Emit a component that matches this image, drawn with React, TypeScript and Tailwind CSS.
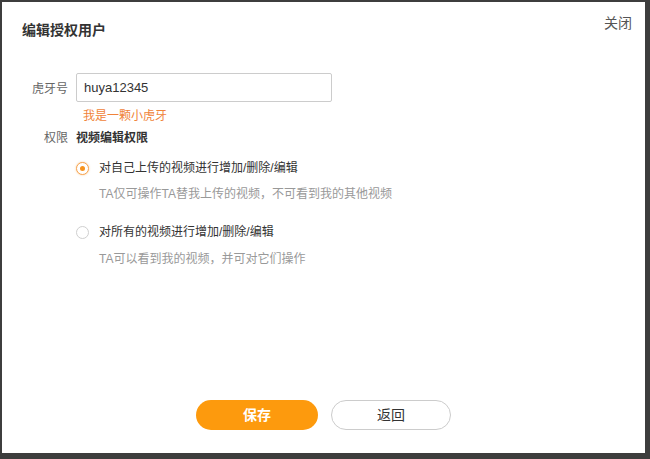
import { useState } from "react";

const options = [
  {
    id: "own",
    label: "对自己上传的视频进行增加/删除/编辑",
    desc: "TA仅可操作TA替我上传的视频，不可看到我的其他视频",
    gap: "mt-[14px]",
  },
  {
    id: "all",
    label: "对所有的视频进行增加/删除/编辑",
    desc: "TA可以看到我的视频，并可对它们操作",
    gap: "mt-[22px]",
  },
] as const;

type OptionId = (typeof options)[number]["id"];

function Radio({ checked }: { checked: boolean }) {
  return (
    <span
      className={`w-[13px] h-[13px] rounded-full border flex items-center justify-center shrink-0 bg-white ${
        checked ? "border-[#f7a451] shadow-[0_0_2px_rgba(247,147,30,0.5)]" : "border-[#cfcfcf]"
      }`}
    >
      {checked && <span className="w-[5px] h-[5px] rounded-full bg-[#f7931e]" />}
    </span>
  );
}

export default function App() {
  const [perm, setPerm] = useState<OptionId>("own");

  return (
    <div className="h-[459px] w-[650px] bg-[#3d3d3d] pl-[2px] pt-[2px] pr-[5px] pb-[6px] font-['Liberation_Sans','Noto_Sans_CJK_SC',sans-serif]">
      <div className="h-full bg-white flex flex-col">
        {/* header */}
        <div className="flex justify-between items-start pl-[20px] pr-[13px]">
          <h1 className="mt-[18px] text-[14px] leading-[20px] font-bold text-[#333]">编辑授权用户</h1>
          <button type="button" className="mt-[11px] text-[14px] leading-[20px] text-[#555]">
            关闭
          </button>
        </div>

        {/* form */}
        <div className="mt-[33px] flex items-center">
          <label className="w-[66px] text-right text-[12px] leading-[16px] text-[#666] pt-[3px]">虎牙号</label>
          <input
            defaultValue="huya12345"
            className="ml-[8px] w-[256px] h-[29px] border border-[#cccccc] rounded-[2px] px-[7px] text-[13px] text-[#333] outline-none"
          />
        </div>
        <p className="mt-[6px] pl-[81px] text-[12px] leading-[16px] text-[#f0833a]">我是一颗小虎牙</p>

        <div className="mt-[6px] flex items-center text-[12px] leading-[16px]">
          <span className="w-[66px] text-right text-[#666]">权限</span>
          <span className="ml-[8px] font-bold text-[#333]">视频编辑权限</span>
        </div>

        <div className="pl-[74px]">
          {options.map((o) => (
            <div key={o.id}>
              <button
                type="button"
                onClick={() => setPerm(o.id)}
                className={`${o.gap} flex items-center gap-[10px] text-[12px] leading-[16px] text-[#333]`}
              >
                <Radio checked={perm === o.id} />
                {o.label}
              </button>
              <p className={`${o.id === "own" ? "mt-[10px]" : "mt-[11px]"} pl-[23px] text-[12px] leading-[16px] text-[#999]`}>
                {o.desc}
              </p>
            </div>
          ))}
        </div>

        {/* footer */}
        <div className="mt-auto pb-[23px] flex justify-center gap-[13px]">
          <button
            type="button"
            className="w-[122px] h-[30px] rounded-full bg-[#fd9a0d] text-white text-[14px] font-bold"
          >
            保存
          </button>
          <button
            type="button"
            className="w-[120px] h-[30px] rounded-full border border-[#cccccc] bg-white text-[#333] text-[14px]"
          >
            返回
          </button>
        </div>
      </div>
    </div>
  );
}
